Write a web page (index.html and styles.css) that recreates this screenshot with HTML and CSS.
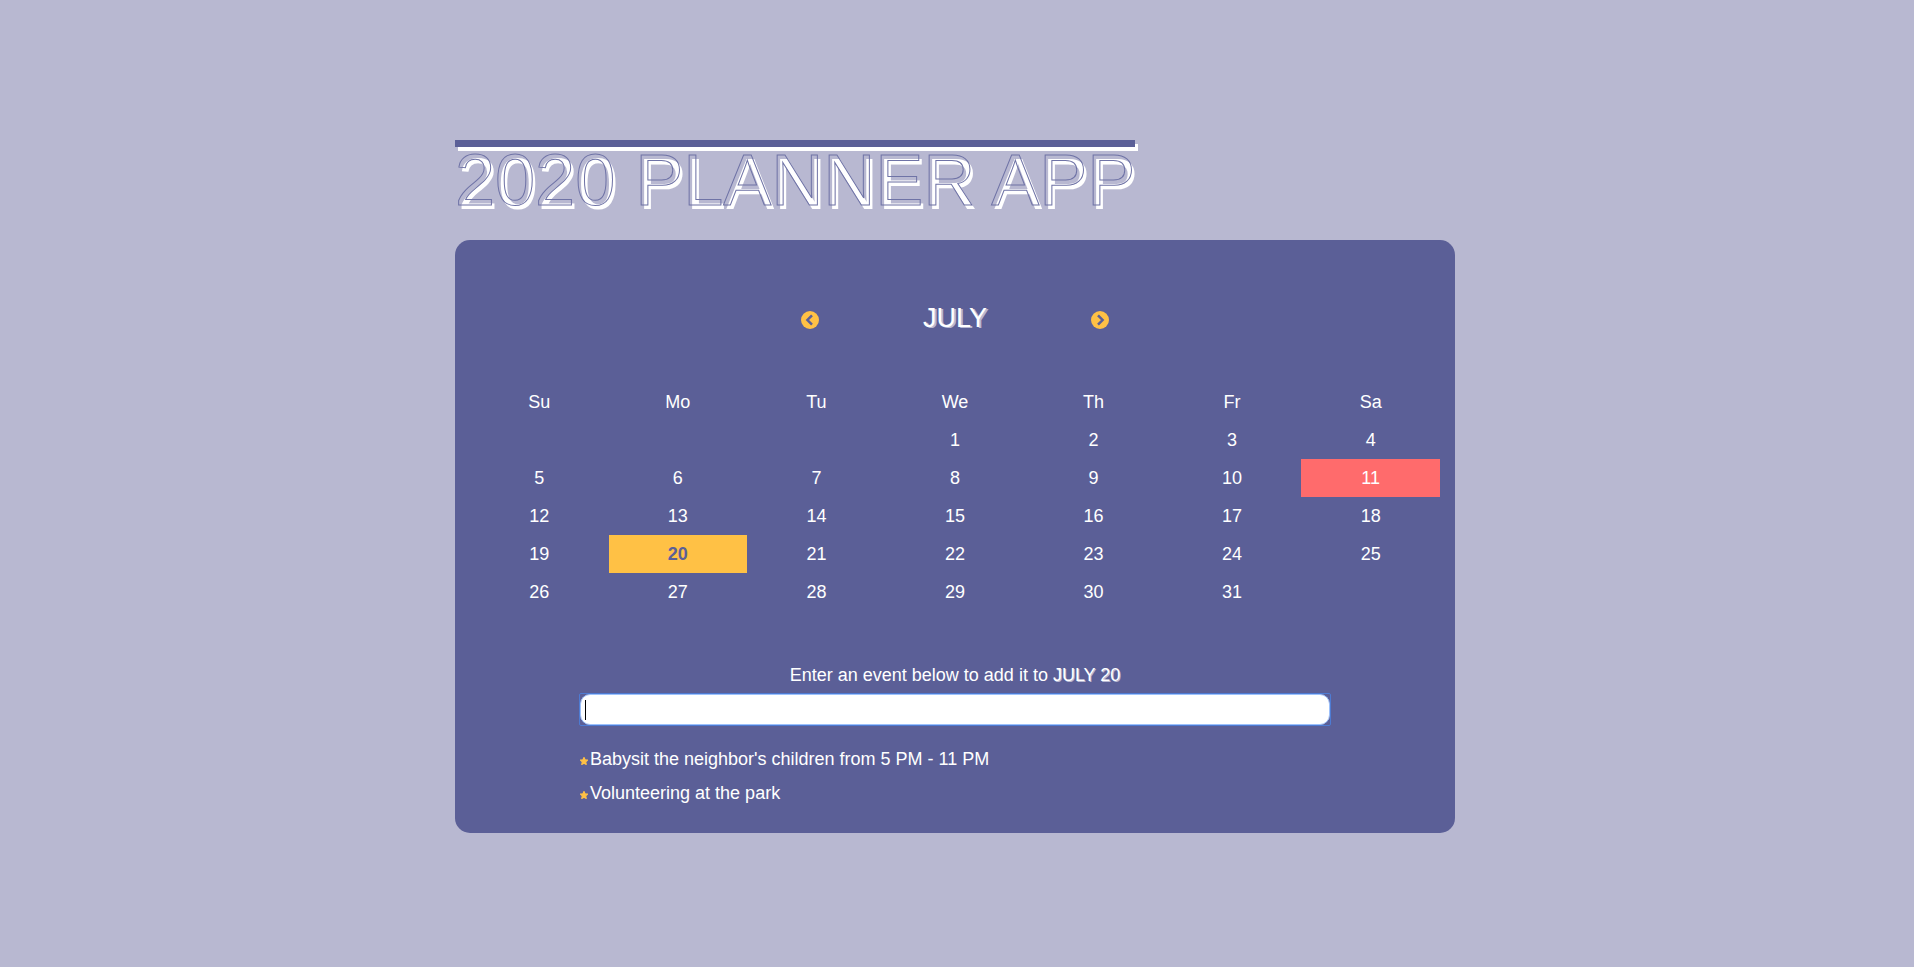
FILE: index.html
```html
<!DOCTYPE html>
<html lang="en">
<head>
<meta charset="utf-8">
<meta name="viewport" content="width=device-width, initial-scale=1">
<title>2020 Planner App</title>
<link rel="stylesheet" href="styles.css">
</head>
<body>
<main class="planner">
  <h1 class="title">2020 PLANNER APP</h1>
  <section class="panel">
    <header class="month-bar">
      <button class="nav" type="button" aria-label="Previous month">
        <svg viewBox="0 0 18 18" width="18" height="18"><circle cx="9" cy="9" r="9" fill="#ffc145"/><path d="M11 4.300 6.400 9l4.600 4.700" fill="none" stroke="#5b5f97" stroke-width="2.500"/></svg>
      </button>
      <h2 class="month">JULY</h2>
      <button class="nav" type="button" aria-label="Next month">
        <svg viewBox="0 0 18 18" width="18" height="18"><circle cx="9" cy="9" r="9" fill="#ffc145"/><path d="M7 4.300 11.600 9 7 13.700" fill="none" stroke="#5b5f97" stroke-width="2.500"/></svg>
      </button>
    </header>
    <table class="calendar">
      <thead>
        <tr><th>Su</th><th>Mo</th><th>Tu</th><th>We</th><th>Th</th><th>Fr</th><th>Sa</th></tr>
      </thead>
      <tbody>
        <tr><td></td><td></td><td></td><td>1</td><td>2</td><td>3</td><td>4</td></tr>
        <tr><td>5</td><td>6</td><td>7</td><td>8</td><td>9</td><td>10</td><td class="today">11</td></tr>
        <tr><td>12</td><td>13</td><td>14</td><td>15</td><td>16</td><td>17</td><td>18</td></tr>
        <tr><td>19</td><td class="selected">20</td><td>21</td><td>22</td><td>23</td><td>24</td><td>25</td></tr>
        <tr><td>26</td><td>27</td><td>28</td><td>29</td><td>30</td><td>31</td><td></td></tr>
      </tbody>
    </table>
    <form class="events">
      <label class="prompt" for="event">Enter an event below to add it to <strong>JULY 20</strong></label>
      <div class="field"><input class="event-input" id="event" type="text" autocomplete="off"></div>
      <ul class="event-list">
        <li><svg class="star" viewBox="1 1 22 22" width="8" height="8"><path d="M12 2l3 6.500 7 .8-5.200 4.900 1.400 7.300-6.200-3.500-6.200 3.500 1.400-7.300L2 9.300l7-.8z" fill="#ffc145" stroke="#ffc145" stroke-width="3" stroke-linejoin="round"/></svg>Babysit the neighbor's children from 5 PM - 11 PM</li>
        <li><svg class="star" viewBox="1 1 22 22" width="8" height="8"><path d="M12 2l3 6.500 7 .8-5.200 4.900 1.400 7.300-6.200-3.500-6.200 3.500 1.400-7.300L2 9.300l7-.8z" fill="#ffc145" stroke="#ffc145" stroke-width="3" stroke-linejoin="round"/></svg>Volunteering at the park</li>
      </ul>
    </form>
  </section>
</main>
</body>
</html>
```
FILE: styles.css
```css
* {
  box-sizing: border-box;
}

body {
  margin: 0;
  padding-right: 4px;
  background: #b8b8d1;
  color: #fff;
  font: 18px/20px "Liberation Sans", Arial, sans-serif;
}

.planner {
  max-width: 1000px;
  margin: 0 auto;
  padding: 140px 0;
}

.title {
  width: fit-content;
  margin: 0 0 20px;
  font-size: 72px;
  font-weight: 400;
  line-height: 80px;
  color: transparent;
  -webkit-text-stroke: 1px #6f73a6;
  text-shadow: 3px 4px #fff;
}

.title::before {
  content: "";
  display: block;
  height: 7px;
  margin-bottom: -7px;
  background: #5b5f97;
  box-shadow: 3px 4px #fff;
}

.panel {
  padding: 60px 15px 30px;
  border-radius: 15px;
  background: #5b5f97;
}

.month-bar {
  display: flex;
  align-items: center;
  justify-content: space-between;
  width: 308px;
  margin: 0 auto 47px;
}

.month {
  margin: 0;
  font-size: 27px;
  font-weight: 400;
  line-height: 36px;
  text-shadow: 2px 1px #b8b8d1;
}

.nav {
  display: flex;
  margin: 4px 0 0;
  padding: 0;
  border: 0;
  background: none;
}

.calendar {
  width: 100%;
  table-layout: fixed;
  border-collapse: collapse;
  text-align: center;
}

.calendar th,
.calendar td {
  height: 38px;
  padding: 0;
  font-weight: 400;
}

.calendar .today {
  background: #ff6b6c;
}

.calendar .selected {
  background: #ffc145;
  color: #5b5f97;
  font-weight: 700;
}

.events {
  max-width: 752px;
  margin: 54px auto 0;
}

.prompt {
  display: block;
  margin-bottom: 8px;
  text-align: center;
}

.prompt strong {
  font-weight: 400;
  text-shadow: 1px 1px #b8b8d1;
}

.field {
  display: flex;
  border: 1px solid #4d7bd3;
  border-radius: 2px;
}

.event-input {
  flex: 1;
  height: 31px;
  padding: 4px;
  border: 1px solid #9dc1fb;
  border-radius: 10px;
  outline: 0;
  background: #fff linear-gradient(#000, #000) 4px center / 1px 20px no-repeat;
  font: inherit;
}

.event-list {
  display: grid;
  gap: 14px;
  margin: 23px 0 0;
  padding: 0 1px;
  list-style: none;
}

.star {
  margin-right: 2px;
}
```
